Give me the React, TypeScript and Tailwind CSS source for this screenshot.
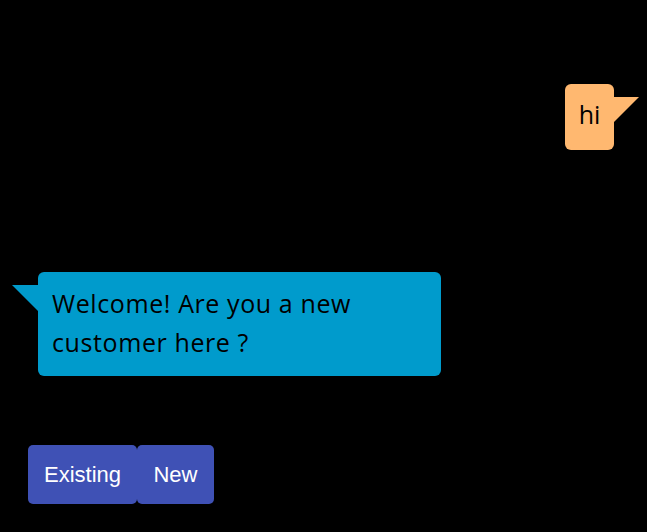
export default function App() {
  return (
    <div className="min-h-[532px] w-full bg-black font-['Open_Sans',sans-serif]">
      <div className="flex justify-end pt-[84px] pr-[33px]">
        <div className="relative">
          <div className="flex h-[66px] w-[49px] items-center justify-center rounded-[6px] bg-[#ffb870] pb-[4px] text-[25px] text-black">
            hi
          </div>
          <div className="absolute left-[48px] top-[13px] h-0 w-0 border-r-[26px] border-t-[26px] border-r-transparent border-t-[#ffb870]" />
        </div>
      </div>

      <div className="pl-[38px] pt-[122px]">
        <div className="relative w-[403px]">
          <div className="rounded-[6px] bg-[#009bcc] px-[14px] pt-[12px] pb-[14px] text-[25px] leading-[39px] tracking-[0.6px] text-black">
            Welcome! Are you a new customer here ?
          </div>
          <div className="absolute -left-[26px] top-[13px] h-0 w-0 border-l-[26px] border-t-[26px] border-l-transparent border-t-[#009bcc]" />
        </div>
      </div>

      <div className="flex pl-[28px] pt-[69px] font-['Liberation_Sans',sans-serif]">
        <button className="h-[59px] w-[109px] rounded-[5px] bg-[#3f51b5] text-[22px] text-white">
          Existing
        </button>
        <button className="h-[59px] w-[77px] rounded-[5px] bg-[#3f51b5] text-[22px] text-white">
          New
        </button>
      </div>
    </div>
  )
}
